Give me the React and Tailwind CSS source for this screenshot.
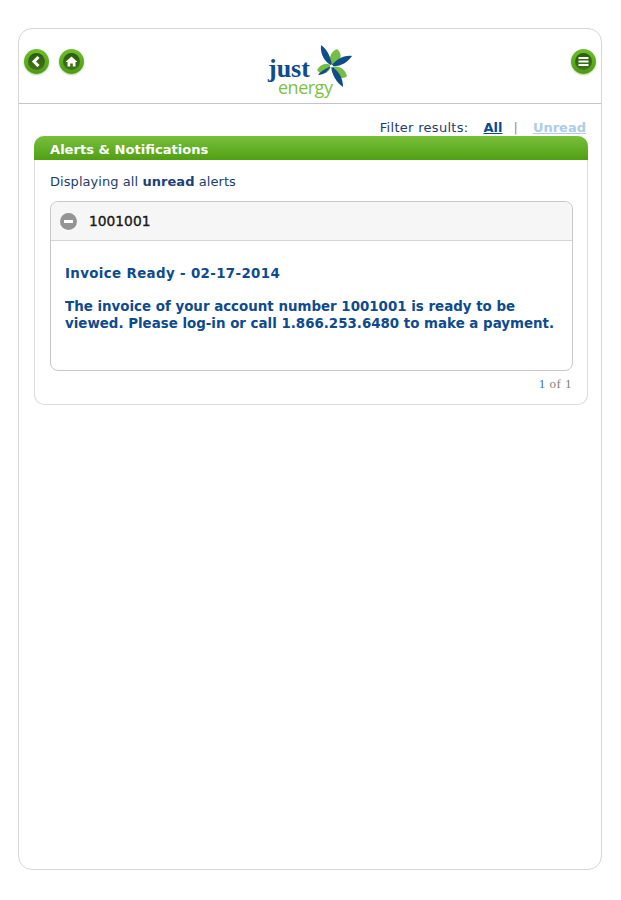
import React from "react";

function RoundButton({ children }) {
  return (
    <div className="w-[25px] h-[25px] rounded-full bg-gradient-to-b from-[#70bd2c] to-[#4d9a12] shadow-[0_1px_2px_rgba(90,150,40,0.45)] flex items-center justify-center">
      <div className="w-[17px] h-[17px] rounded-full bg-gradient-to-b from-[#2a5c0c] to-[#3f741c] flex items-center justify-center">
        {children}
      </div>
    </div>
  );
}

function Pinwheel() {
  return (
    <svg width="46" height="46" viewBox="0 0 46 46" className="absolute left-[48px] top-0">
      <path d="M27 7 C34 13 30 21 22 24 C18 17 20 10 27 7Z" fill="#76bd43" />
      <path d="M7 28 C11 21 18 20 21 24 C19 32 11 34 7 28Z" fill="#76bd43" />
      <path d="M37 34 C32 39 25 34 22 25 C29 23 35 27 37 34Z" fill="#76bd43" />
      <path d="M11 3 C18 8 21 16 22 24 C15 20 10 13 11 3Z" fill="#0f4c8a" />
      <path d="M42 14 C33 13 26 18 21 24 C30 25 37 21 42 14Z" fill="#0f4c8a" />
      <path d="M33 45 C33 36 29 29 21 24 C22 33 26 40 33 45Z" fill="#0f4c8a" />
      <path d="M8 33 C14 33 18 29 21 24 C16 27 12 28 8 33Z" fill="#0f4c8a" />
      <circle cx="21.5" cy="24" r="1.6" fill="#ffffff" />
    </svg>
  );
}

export default function App() {
  return (
    <div className="bg-white h-[900px] pt-[28px] pl-[18px] font-['DejaVu_Sans',sans-serif]">
      <div className="w-[584px] h-[842px] border border-[#d6d6d6] rounded-[14px] flex flex-col">
        <header className="h-[75px] flex-none border-b border-[#c4c4c4] flex justify-between items-start pt-[20px] pl-[5px] pr-[5px] relative">
          <div className="flex gap-[10px]">
            <RoundButton>
              <svg width="11" height="11" viewBox="0 0 11 11">
                <path d="M7.5 1 L3 5.5 L7.5 10" fill="none" stroke="#fff" strokeWidth="3" />
              </svg>
            </RoundButton>
            <RoundButton>
              <svg width="13" height="13" viewBox="0 0 13 13">
                <path d="M6.5 1.5 L12.5 7 L10.5 7 L10.5 11.5 L7.8 11.5 L7.8 8.5 L5.2 8.5 L5.2 11.5 L2.5 11.5 L2.5 7 L0.5 7 Z" fill="#fff" />
              </svg>
            </RoundButton>
          </div>
          <div className="absolute left-[243px] top-[13px] w-[96px] h-[56px]">
            <Pinwheel />
            <span className="absolute left-[6px] top-[16px] text-[26px] leading-[22px] font-bold text-[#0f4c8a] font-['Liberation_Serif',serif]">
              just
            </span>
            <span className="absolute left-[16px] top-[38px] text-[18px] leading-[15px] font-normal text-[#7cc242] font-['Open_Sans',sans-serif] tracking-[-0.5px]">
              energy
            </span>
          </div>
          <RoundButton>
            <svg width="11" height="11" viewBox="0 0 11 11">
              <path d="M0.5 2 H10.5 M0.5 5.5 H10.5 M0.5 9 H10.5" stroke="#fff" strokeWidth="2" />
            </svg>
          </RoundButton>
        </header>

        <div className="pl-[15px] pr-[13px] flex flex-col">
          <div className="h-[32px] flex items-center justify-end pr-[2px] pt-[15px] text-[13px] leading-none">
            <span className="text-[#1d3c6b] tracking-[0.3px]">Filter results:</span>
            <a className="ml-[15px] font-bold text-[#0b4a91] underline">All</a>
            <span className="ml-[11px] text-[#a08a8a]">|</span>
            <a className="ml-[15px] font-bold text-[#b0cce4] underline">Unread</a>
          </div>

          <section className="h-[269px] border border-t-0 border-[#dcdcdc] rounded-[10px] flex flex-col">
            <h2 className="h-[24px] -mx-px rounded-t-[10px] bg-gradient-to-b from-[#78c03a] to-[#4fa010] text-white font-bold text-[13.1px] leading-[27px] pl-[16px]">
              Alerts &amp; Notifications
            </h2>
            <p className="mt-[14px] ml-[15px] text-[13px] leading-[16px] tracking-[0.06px] text-[#1d3c6b]">
              Displaying all <b className="text-[#1d3f77]">unread</b> alerts
            </p>
            <div className="mt-[11px] ml-[15px] mr-[14px] h-[170px] border border-[#c8c8c8] rounded-[8px] flex flex-col">
              <div className="h-[39px] flex-none bg-[#f6f6f6] border-b border-[#d4d4d4] rounded-t-[8px] flex items-center pl-[9px]">
                <span className="w-[17px] h-[17px] rounded-full bg-[#949494] flex items-center justify-center">
                  <span className="w-[9px] h-[3px] bg-white" />
                </span>
                <span className="ml-[12px] text-[13.8px] [-webkit-text-stroke:0.35px_#1a1a1a] text-[#1a1a1a]">1001001</span>
              </div>
              <div className="pl-[14px] pt-[24px] text-[13.4px] leading-[17px] font-bold text-[#0e4a8e]">
                <div className="tracking-[0.35px]">Invoice Ready - 02-17-2014</div>
                <div className="mt-[16px]">
                  The invoice of your account number 1001001 is ready to be
                  <br />
                  viewed. Please log-in or call 1.866.253.6480 to make a payment.
                </div>
              </div>
            </div>
            <div className="mt-[5px] pr-[15px] text-right text-[13px] leading-[16px] text-[#808080] font-['Liberation_Serif',serif] tracking-[0.5px]">
              <span className="text-[#41709f]">1</span> of 1
            </div>
          </section>
        </div>
      </div>
    </div>
  );
}
